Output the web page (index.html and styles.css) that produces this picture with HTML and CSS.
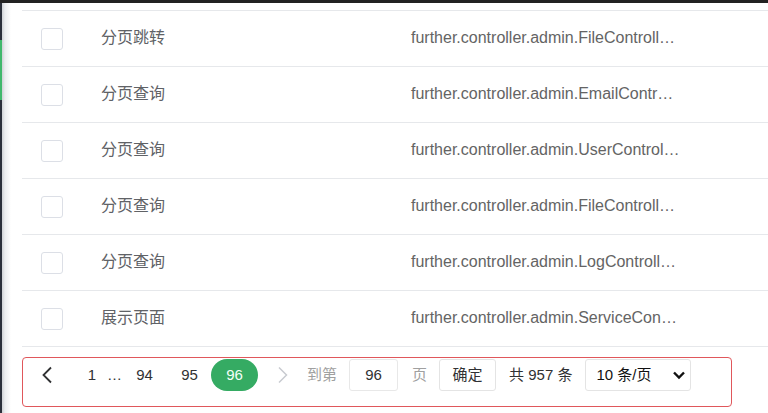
FILE: index.html
```html
<!DOCTYPE html>
<html lang="zh-CN">
<head>
<meta charset="utf-8">
<title>日志列表</title>
<link rel="stylesheet" href="styles.css">
</head>
<body>
<div class="topbar"></div>
<div class="layout">
  <aside class="side">
    <div class="side-dark top"></div>
    <div class="side-active"></div>
    <div class="side-dark rest"></div>
  </aside>
  <main class="content">
    <div class="table">
      <div class="row">
        <div class="cell cell-check"><span class="checkbox"></span></div>
        <div class="cell cell-name">分页跳转</div>
        <div class="cell cell-path">further.controller.admin.FileControll…</div>
      </div>
      <div class="row">
        <div class="cell cell-check"><span class="checkbox"></span></div>
        <div class="cell cell-name">分页查询</div>
        <div class="cell cell-path">further.controller.admin.EmailContr…</div>
      </div>
      <div class="row">
        <div class="cell cell-check"><span class="checkbox"></span></div>
        <div class="cell cell-name">分页查询</div>
        <div class="cell cell-path">further.controller.admin.UserControl…</div>
      </div>
      <div class="row">
        <div class="cell cell-check"><span class="checkbox"></span></div>
        <div class="cell cell-name">分页查询</div>
        <div class="cell cell-path">further.controller.admin.FileControll…</div>
      </div>
      <div class="row">
        <div class="cell cell-check"><span class="checkbox"></span></div>
        <div class="cell cell-name">分页查询</div>
        <div class="cell cell-path">further.controller.admin.LogControll…</div>
      </div>
      <div class="row">
        <div class="cell cell-check"><span class="checkbox"></span></div>
        <div class="cell cell-name">展示页面</div>
        <div class="cell cell-path">further.controller.admin.ServiceCon…</div>
      </div>
    </div>

    <div class="pager">
      <button class="pg-btn pg-prev" aria-label="上一页">
        <svg width="12" height="18" viewBox="0 0 12 18"><path d="M10 1.5 L2.5 9 L10 16.5" fill="none" stroke="#303133" stroke-width="1.8"/></svg>
      </button>
      <span class="pg-num pg-first">1</span>
      <span class="pg-more">…</span>
      <span class="pg-num">94</span>
      <span class="pg-num">95</span>
      <span class="pg-num pg-active">96</span>
      <button class="pg-btn pg-next" aria-label="下一页">
        <svg width="12" height="18" viewBox="0 0 12 18"><path d="M2 1.5 L9.5 9 L2 16.5" fill="none" stroke="#c8cbd0" stroke-width="1.5"/></svg>
      </button>
      <span class="pg-label pg-goto">到第</span>
      <span class="pg-input">96</span>
      <span class="pg-label pg-unit">页</span>
      <span class="pg-confirm">确定</span>
      <span class="pg-total">共 957 条</span>
      <span class="pg-select">
        <span>10 条/页</span>
        <svg width="14" height="10" viewBox="0 0 14 10"><path d="M2 2.5 L7 7.5 L12 2.5" fill="none" stroke="#111" stroke-width="2.4"/></svg>
      </span>
    </div>
  </main>
</div>
</body>
</html>
```

FILE: styles.css
```css
* { box-sizing: border-box; }
html, body { margin: 0; padding: 0; background: #fff; }
body {
  font-family: "Liberation Sans", "Noto Sans CJK SC", sans-serif;
  width: 768px;
  height: 413px;
  overflow: hidden;
}
.topbar { height: 3px; background: #222; }
.layout { display: flex; height: 410px; }
.side { width: 2px; display: flex; flex-direction: column; }
.side-dark { background: #2b303b; }
.side-dark.top { height: 37px; }
.side-active { height: 60px; background: #41b86d; }
.side-dark.rest { flex: 1; }
.content {
  flex: 1;
  padding-left: 20px;
  background: linear-gradient(to right, #cfd2d6 0, #eceef0 3px, #fff 9px);
}
.table { margin-top: 7px; }
.row {
  display: grid;
  grid-template-columns: 60px 310px 1fr;
  align-items: center;
  height: 56px;
  border-top: 1px solid #e6e8eb;
}
.row:last-child { border-bottom: 1px solid #e6e8eb; height: 57px; }
.cell { padding-left: 19px; white-space: nowrap; color: #606266; font-size: 16px; line-height: 20px; padding-bottom: 1px; }
.cell-check { display: flex; align-items: center; padding-top: 1px; padding-bottom: 0; }
.checkbox {
  display: block;
  width: 22px;
  height: 22px;
  border: 1px solid #dcdfe6;
  border-radius: 3px;
  background: #fff;
}
.cell-path { color: #646464; }

.pager {
  margin-top: 10px;
  width: 710px;
  height: 50px;
  border: 1px solid #e0575b;
  border-radius: 4px;
  display: flex;
  align-items: flex-start;
  padding-top: 1px;
  font-size: 15px;
  line-height: 18px;
  color: #303133;
}
.pager > * { height: 32px; display: flex; align-items: center; justify-content: center; flex: none; padding-bottom: 1px; }
.pg-btn { border: 0; background: none; padding: 0; width: 30px; }
.pager > .pg-btn { padding-bottom: 0; }
.pg-prev { margin-left: 9px; }
.pg-next { margin-left: 10px; }
.pg-num { width: 45px; }
.pg-first { width: 30px; margin-left: 15px; }
.pg-more { width: 15px; }
.pg-active {
  width: 47px;
  margin-left: -1px;
  background: #35ab63;
  color: #f4fff8;
  border-radius: 16px;
}
.pg-label { color: #a0a0a0; }
.pg-goto { margin-left: 9px; }
.pg-input {
  margin-left: 12px;
  width: 49px;
  border: 1px solid #e8e8e8;
  border-radius: 3px;
}
.pg-unit { margin-left: 14px; }
.pg-confirm {
  margin-left: 12px;
  width: 57px;
  border: 1px solid #e4e4e4;
  border-radius: 3px;
}
.pg-total { margin-left: 13px; }
.pager > .pg-select {
  margin-left: 13px;
  width: 106px;
  border: 1px solid #e4e4e4;
  border-radius: 3px;
  justify-content: space-between;
  padding: 0 4px 1px 10px;
  color: #111;
}
```
